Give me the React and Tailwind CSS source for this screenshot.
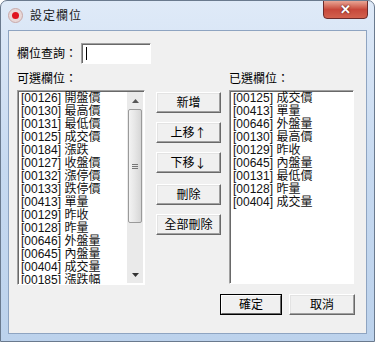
import React from "react";

const FONT = { fontFamily: '"Liberation Sans", "Noto Sans CJK TC", sans-serif' };
const CJK = { fontFamily: '"Noto Sans CJK TC", sans-serif' };

const leftItems = [
  ["00126", "開盤價"],
  ["00130", "最高價"],
  ["00131", "最低價"],
  ["00125", "成交價"],
  ["00184", "漲跌"],
  ["00127", "收盤價"],
  ["00132", "漲停價"],
  ["00133", "跌停價"],
  ["00413", "單量"],
  ["00129", "昨收"],
  ["00128", "昨量"],
  ["00646", "外盤量"],
  ["00645", "內盤量"],
  ["00404", "成交量"],
  ["00185", "漲跌幅"],
];

const rightItems = [
  ["00125", "成交價"],
  ["00413", "單量"],
  ["00646", "外盤量"],
  ["00130", "最高價"],
  ["00129", "昨收"],
  ["00645", "內盤量"],
  ["00131", "最低價"],
  ["00128", "昨量"],
  ["00404", "成交量"],
];

function Btn({ children, w = "w-[65px]", def = false }) {
  return (
    <div
      className={`${w} h-[21px] flex items-center justify-center text-[12px] text-black bg-[#f0f0f0] border ${
        def ? "border-black" : "border-t-white border-l-white border-b-[#696969] border-r-[#696969]"
      } shadow-[inset_-1px_-1px_0_#a0a0a0,inset_1px_1px_0_#e3e3e3]`}
    >
      {children}
    </div>
  );
}

function Item({ code, name }) {
  return (
    <div className="h-[13px] leading-[13px] text-[12px] whitespace-nowrap text-[#111]">
      [{code}] {name}
    </div>
  );
}

export default function App() {
  return (
    <div
      style={FONT}
      className="w-[375px] h-[342px] overflow-hidden rounded-t-[7px] border border-[#6a7a8e] bg-gradient-to-b from-[#dfeaf8] via-[#c6d9f0] to-[#bcd2ec] flex flex-col"
    >
      {/* title bar */}
      <div className="h-[29px] flex items-start relative">
        <div className="ml-[7px] mt-[7px] w-[15px] h-[15px] rounded-full bg-[#e8d8d8] border border-[#c9a9a9] flex items-center justify-center">
          <div className="w-[7px] h-[7px] rounded-full bg-[#e0141e]" />
        </div>
        <div className="ml-[7px] mt-[6px] text-[12px] text-[#1a1a1a] tracking-[1px]">設定欄位</div>
        <div className="absolute right-[6px] top-[-1px] w-[45px] h-[19px] rounded-b-[4px] border border-[#6b2c2c] bg-gradient-to-b from-[#e8a595] via-[#c7483b] to-[#d2614e] flex items-center justify-center">
          <span className="text-white font-bold text-[13px] leading-none [text-shadow:0_0_2px_#3a0a0a]">✕</span>
        </div>
      </div>
      {/* client area */}
      <div className="ml-[7px] mr-[7px] h-[304px] bg-[#f0f0f0] border border-[#8ea4c1] flex flex-col">
        <div className="flex items-center mt-[12px] ml-[8px]">
          <span className="text-[12px] text-black">欄位查詢：</span>
          <div className="ml-[4px] w-[70px] h-[21px] bg-white border border-t-[#a0a0a0] border-l-[#a0a0a0] border-b-white border-r-white shadow-[inset_1px_1px_0_#696969] flex items-center pl-[4px]">
            <div className="w-px h-[13px] bg-black" />
          </div>
        </div>
        <div className="flex mt-[8px] ml-[8px]">
          {/* left column */}
          <div className="w-[128px] flex flex-col">
            <span className="text-[12px] text-black h-[18px] leading-[14px]">可選欄位：</span>
            <div className="h-[195px] bg-white border border-t-[#a0a0a0] border-l-[#a0a0a0] border-b-white border-r-white shadow-[inset_1px_1px_0_#696969] flex overflow-hidden">
              <div className="flex-1 pl-[3px] pt-[1px] overflow-hidden">
                {leftItems.map(([c, n]) => (
                  <Item key={c} code={c} name={n} />
                ))}
              </div>
              <div className="w-[16px] mt-[1px] mb-[1px] mr-[1px] bg-[#eaeaea] flex flex-col items-center">
                <div className="h-[17px] w-full flex items-center justify-center">
                  <svg width="7" height="4" viewBox="0 0 7 4"><path d="M0 4 L3.5 0 L7 4 Z" fill="#555" /></svg>
                </div>
                <div className="w-[14px] h-[114px] rounded-[2px] border border-[#9a9a9a] bg-gradient-to-r from-[#f3f3f3] via-[#e6e6e6] to-[#d6d6d6] flex flex-col items-center justify-center gap-[1px]">
                  <div className="w-[6px] h-px bg-[#777]" />
                  <div className="w-[6px] h-px bg-[#777]" />
                  <div className="w-[6px] h-px bg-[#777]" />
                </div>
                <div className="flex-1" />
                <div className="h-[17px] w-full flex items-center justify-center">
                  <svg width="7" height="4" viewBox="0 0 7 4"><path d="M0 0 L3.5 4 L7 0 Z" fill="#333" /></svg>
                </div>
              </div>
            </div>
          </div>
          {/* buttons */}
          <div className="ml-[11px] mt-[20px] flex flex-col gap-[9px]">
            <Btn>新增</Btn>
            <Btn>上移<span style={CJK} className="text-[12px] leading-none">↑</span></Btn>
            <Btn>下移<span style={CJK} className="text-[12px] leading-none">↓</span></Btn>
            <div className="mt-[2px]"><Btn>刪除</Btn></div>
            <Btn>全部刪除</Btn>
          </div>
          {/* right column */}
          <div className="ml-[8px] w-[125px] flex flex-col">
            <span className="text-[12px] text-black h-[18px] leading-[14px]">已選欄位：</span>
            <div className="h-[194px] bg-white border border-t-[#a0a0a0] border-l-[#a0a0a0] border-b-white border-r-white shadow-[inset_1px_1px_0_#696969] pl-[3px] pt-[1px] overflow-hidden">
              {rightItems.map(([c, n]) => (
                <Item key={c} code={c} name={n} />
              ))}
            </div>
          </div>
        </div>
        <div className="flex justify-end mt-[9px] mr-[11px] gap-[7px]">
          <Btn w="w-[62px]" def>
            <div className="w-full h-full flex items-center justify-center border border-t-white border-l-white border-b-[#696969] border-r-[#696969]">確定</div>
          </Btn>
          <Btn w="w-[66px]">取消</Btn>
        </div>
      </div>
    </div>
  );
}
